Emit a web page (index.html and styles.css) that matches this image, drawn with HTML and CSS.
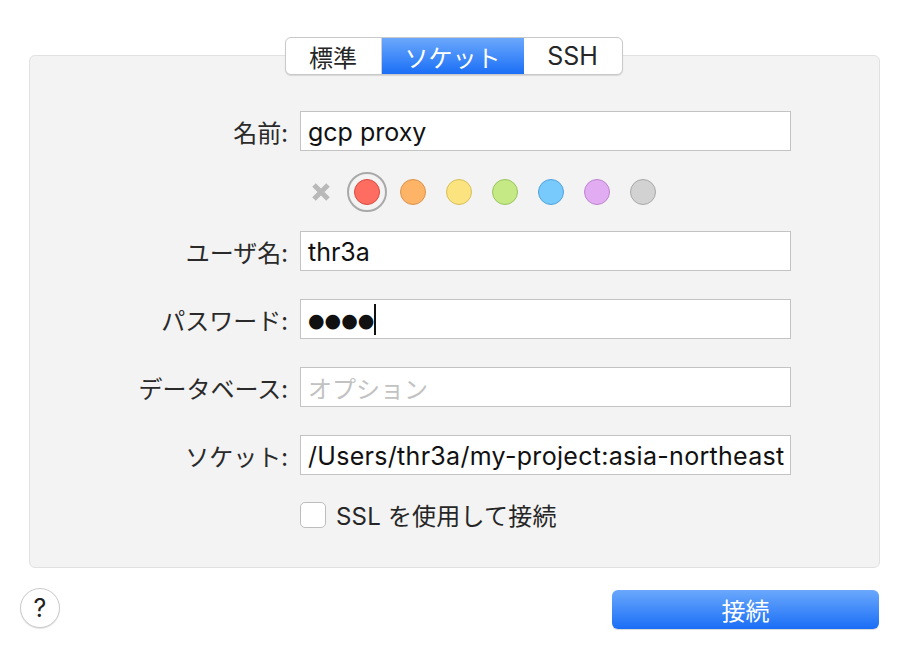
FILE: index.html
```html
<!DOCTYPE html>
<html lang="ja">
<head>
<meta charset="utf-8">
<link rel="stylesheet" href="styles.css">
</head>
<body>
<div class="window">
  <div class="tabs">
    <div class="tab tab-std">標準</div>
    <div class="tab tab-sock active">ソケット</div>
    <div class="tab tab-ssh">SSH</div>
  </div>
  <div class="panel">
    <div class="row row-name">
      <div class="label">名前:</div>
      <div class="field">gcp proxy</div>
    </div>
    <div class="row row-colors">
      <div class="label"></div>
      <div class="colors">
        <div class="swatch">
          <svg width="20" height="20" viewBox="0 0 20 20"><path d="M3 3 L17 17 M17 3 L3 17" stroke="#b9b9b9" stroke-width="5" stroke-linecap="butt"/></svg>
        </div>
        <div class="swatch"><div class="ring"><div class="dot red"></div></div></div>
        <div class="swatch"><div class="dot orange"></div></div>
        <div class="swatch"><div class="dot yellow"></div></div>
        <div class="swatch"><div class="dot green"></div></div>
        <div class="swatch"><div class="dot blue"></div></div>
        <div class="swatch"><div class="dot purple"></div></div>
        <div class="swatch"><div class="dot gray"></div></div>
      </div>
    </div>
    <div class="row row-user">
      <div class="label">ユーザ名:</div>
      <div class="field">thr3a</div>
    </div>
    <div class="row row-gap">
      <div class="label">パスワード:</div>
      <div class="field pw"><span class="bullets">●●●●</span><span class="caret"></span></div>
    </div>
    <div class="row row-gap">
      <div class="label">データベース:</div>
      <div class="field placeholder">オプション</div>
    </div>
    <div class="row row-gap">
      <div class="label">ソケット:</div>
      <div class="field socket">/Users/thr3a/my-project:asia-northeast</div>
    </div>
    <div class="row row-check">
      <div class="label"></div>
      <div class="check">
        <div class="box"></div>
        <span class="check-text">SSL を使用して接続</span>
      </div>
    </div>
  </div>
  <div class="footer">
    <div class="help">?</div>
    <div class="connect">接続</div>
  </div>
</div>
</body>
</html>
```
FILE: styles.css
```css
* { box-sizing: border-box; }
html, body {
  margin: 0;
  padding: 0;
  background: #ffffff;
}
body {
  font-family: "Inter", "Noto Sans CJK JP", sans-serif;
  color: #222;
  width: 898px;
  height: 652px;
  overflow: hidden;
}
.window {
  padding: 37px 18px 0 29px;
  display: flex;
  flex-direction: column;
}
.tabs {
  align-self: center;
  display: flex;
  height: 38px;
  margin-left: -2px;
  margin-bottom: -20px;
  position: relative;
  z-index: 2;
  background: #fff;
  border: 1px solid #c9c9c9;
  border-radius: 6px;
  box-shadow: 0 1px 1px rgba(0,0,0,0.12);
  overflow: hidden;
}
.tab {
  display: flex;
  align-items: center;
  justify-content: center;
  font-family: "Noto Sans CJK JP", sans-serif;
  font-size: 24px;
  color: #262626;
}
.tab-std { width: 96px; border-right: 1px solid #d0d0d0; }
.tab-sock { width: 142px; }
.tab-ssh { width: 98px; font-family: "Inter", "Noto Sans CJK JP", sans-serif; font-size: 25px; }
.tab.active {
  background: linear-gradient(#6ba8fc, #1b6ff6);
  color: #fff;
}
.panel {
  width: 851px;
  height: 513px;
  background: #f3f3f3;
  border: 1px solid #e1e1e1;
  border-radius: 6px;
  padding-top: 55px;
  display: flex;
  flex-direction: column;
}
.row {
  display: flex;
  align-items: center;
}
.label {
  width: 258px;
  flex: none;
  text-align: right;
  font-family: "Noto Sans CJK JP", sans-serif;
  font-size: 24px;
  color: #2a2a2a;
  margin-right: 12px;
  line-height: 1;
  padding-top: 2px;
}
.field {
  width: 491px;
  height: 40px;
  flex: none;
  background: #fff;
  border: 1px solid #c3c3c3;
  padding: 1px 7px 0;
  display: flex;
  align-items: center;
  font-size: 25px;
  color: #111;
  white-space: nowrap;
  overflow: hidden;
}
.field.socket {
  letter-spacing: 0.3px;
}
.field.placeholder {
  color: #c2c2c2;
  font-family: "Noto Sans CJK JP", sans-serif;
  font-size: 24px;
}
.pw .bullets {
  font-family: "DejaVu Sans", sans-serif;
  font-size: 19px;
  letter-spacing: 0px;
}
.caret {
  display: inline-block;
  width: 2px;
  height: 31px;
  background: #111;
}
.row-colors {
  margin-top: 19px;
  height: 44px;
}
.colors {
  display: flex;
  align-items: center;
  padding-left: 1px;
}
.swatch {
  width: 40px;
  height: 40px;
  margin-right: 6px;
  display: flex;
  align-items: center;
  justify-content: center;
}
.ring {
  width: 40px;
  height: 40px;
  border-radius: 50%;
  border: 2px solid #a9a9a9;
  display: flex;
  align-items: center;
  justify-content: center;
}
.dot {
  width: 26px;
  height: 26px;
  border-radius: 50%;
  border: 1.5px solid;
}
.red { background: #fe6d60; border-color: #d8483e; }
.orange { background: #feb466; border-color: #dd914b; }
.yellow { background: #fbe47f; border-color: #d7bf5a; }
.green { background: #c4e985; border-color: #99c55e; }
.blue { background: #78cafd; border-color: #4ea3dc; }
.purple { background: #e1acf2; border-color: #bd84cf; }
.gray { background: #d2d2d2; border-color: #a8a8a8; }
.row-user { margin-top: 17px; }
.row-gap { margin-top: 28px; }
.row-check { margin-top: 22px; }
.check {
  display: flex;
  align-items: center;
}
.box {
  width: 26px;
  height: 26px;
  background: #fff;
  border: 1px solid #bdbdbd;
  border-radius: 5px;
  margin-right: 10px;
}
.check-text {
  font-size: 24px;
  color: #262626;
  letter-spacing: 0.2px;
}
.footer {
  display: flex;
  justify-content: space-between;
  align-items: center;
  margin-top: 18px;
  margin-left: -9px;
}
.help {
  width: 40px;
  height: 40px;
  border-radius: 50%;
  background: #fff;
  border: 1px solid #cbcbcb;
  box-shadow: 0 1px 1px rgba(0,0,0,0.1);
  display: flex;
  align-items: center;
  justify-content: center;
  font-size: 25px;
  color: #222;
}
.connect {
  width: 267px;
  height: 39px;
  border-radius: 6px;
  background: linear-gradient(#6aa8fc, #1a6ef6);
  box-shadow: 0 1px 1px rgba(0,0,0,0.15);
  color: #fff;
  font-family: "Noto Sans CJK JP", sans-serif;
  font-size: 24px;
  display: flex;
  align-items: center;
  justify-content: center;
  margin-right: 1px;
  margin-top: 4px;
}
```
